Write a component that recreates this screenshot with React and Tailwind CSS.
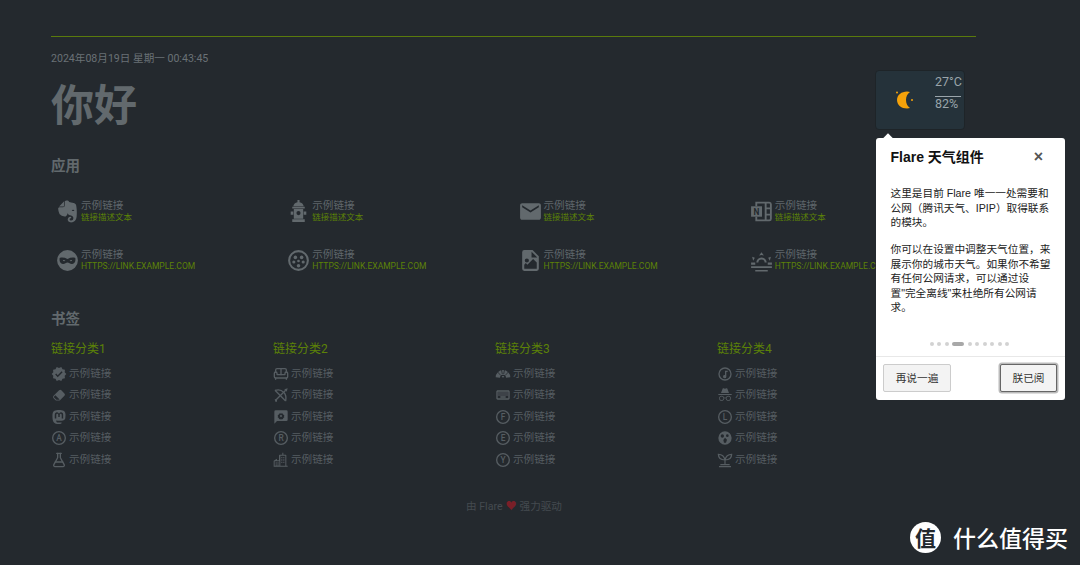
import React from 'react';
import { FaEvernote, FaMastodon } from 'react-icons/fa';
import { MdEmail, MdVerified, MdOutlineKeyboard } from 'react-icons/md';
import { BsEraserFill } from 'react-icons/bs';
import { FlaskConical, Sofa } from 'lucide-react';

const Svg = ({ className, children }) => (
  <svg viewBox="0 0 24 24" fill="currentColor" className={className}>
    {children}
  </svg>
);

const Hydrant = ({ className }) => (
  <Svg className={className}>
    <path fillRule="evenodd" d="M11 1h2v2.100A5 5 0 0 1 17 7H7a5 5 0 0 1 4-3.900V1ZM6 7.500h12V9H6V7.500ZM7.500 9.500h9v9.500h-9V9.500ZM12 11.500a2 2 0 1 0 0 4 2 2 0 0 0 0-4ZM4.500 12H7v3H4.500v-3ZM17 12h2.500v3H17v-3ZM6 19.500h12v2.500H6v-2.500Z" />
  </Svg>
);

const Mask = ({ className }) => (
  <Svg className={className}>
    <path fillRule="evenodd" d="M12 2a10 10 0 1 0 0 20 10 10 0 0 0 0-20ZM4.500 9.500c2.500-.6 5-.2 7.500 1 2.500-1.200 5-1.600 7.500-1 .5 3-.4 5.500-3 5.800-2 .2-3-1.300-4.500-1.300s-2.500 1.500-4.500 1.300c-2.600-.3-3.500-2.800-3-5.800Zm3 2.300c.8-.4 1.800-.2 2.500.5-.7.600-2.100.600-2.500-.5Zm9 0c-.8-.4-1.800-.2-2.500.5.700.6 2.100.6 2.500-.5Z" />
  </Svg>
);

const DotsCircle = ({ className }) => (
  <Svg className={className}>
    <path fillRule="evenodd" d="M12 2a10 10 0 1 0 0 20 10 10 0 0 0 0-20Zm0 2a8 8 0 1 1 0 16 8 8 0 0 1 0-16Z" />
    <circle cx="9" cy="9" r="1.700" />
    <circle cx="15" cy="9" r="1.700" />
    <circle cx="7.500" cy="13.500" r="1.500" />
    <circle cx="16.500" cy="13.500" r="1.500" />
    <circle cx="12" cy="12.500" r="1.300" />
    <circle cx="12" cy="17" r="1.700" />
  </Svg>
);

const FileImage = ({ className }) => (
  <Svg className={className}>
    <path fillRule="evenodd" d="M6 2h8l6 6v12a2 2 0 0 1-2 2H6a2 2 0 0 1-2-2V4a2 2 0 0 1 2-2Zm7 1.500V9h5.500L13 3.500ZM8.500 10a2 2 0 1 0 0 4 2 2 0 0 0 0-4ZM6 20h12v-6l-3.500-3.500L9 16l-1.500-1.500L6 16v4Z" />
  </Svg>
);

const Sunset = ({ className }) => (
  <Svg className={className}>
    <path d="M12 4 9.700 7.200a6.300 6.300 0 0 1 4.600 0L12 4ZM3 8.500l1 3.700 1.600-2.900L3 8.500Zm18 0-2.600.8 1.600 2.900 1-3.700ZM7 14a5 5 0 0 1 10 0h-2a3 3 0 0 0-6 0H7ZM2 14h4v2H2v-2Zm16 0h4v2h-4v-2ZM2 17.500h20v1.800H2v-1.800ZM6 21h12v1.500H6V21Z" />
  </Svg>
);

const OneNote = ({ className }) => (
  <svg viewBox="0 0 24 24" className={className} fill="none" stroke="currentColor" strokeWidth="1.800">
    <path d="M7 7V3.500h12.500a1.500 1.500 0 0 1 1.500 1.500v14a1.500 1.500 0 0 1-1.500 1.500H7V17" />
    <path d="M16 3.500v17M16 9h5M16 15h5" />
    <rect x="2" y="7" width="10.500" height="10" fill="currentColor" stroke="none" />
    <text x="7.200" y="15.200" textAnchor="middle" fontSize="8" fontWeight="700" fill="#24292e" stroke="none" fontFamily="Roboto">N</text>
  </svg>
);

const LetterCircle = ({ letter, className }) => (
  <svg viewBox="0 0 24 24" className={className} fill="none" stroke="currentColor" strokeWidth="2">
    <circle cx="12" cy="12" r="9.500" />
    <text x="12" y="16.500" textAnchor="middle" fontSize="12.500" fontWeight="500" fill="currentColor" stroke="none" fontFamily="Roboto">{letter}</text>
  </svg>
);

const Eraser = ({ className }) => (
  <span className={className}>
    <BsEraserFill className="h-full w-full scale-[0.8]" />
  </span>
);

const Bow = ({ className }) => (
  <svg viewBox="0 0 24 24" className={className} fill="none" stroke="currentColor" strokeWidth="2">
    <path d="M3 5c5-1.500 10-.5 13 3 3 3 4 8 3 13" />
    <path d="M3 5 19 21" />
    <path d="M4 20 19 5" />
    <path d="M17 3.500 22 2l-1.500 5z" fill="currentColor" stroke="none" />
    <path d="M2.500 18.500h3.500v3.500H3.500z" fill="currentColor" stroke="none" />
  </svg>
);

const MessageCog = ({ className }) => (
  <Svg className={className}>
    <path fillRule="evenodd" d="M4 2h16a2 2 0 0 1 2 2v12a2 2 0 0 1-2 2H6l-4 4V4a2 2 0 0 1 2-2Zm8 3.500-1 1.500-1.800-.2-.7 1.700-1.500 1 .5 1.500-.5 1.500 1.500 1 .7 1.700 1.800-.2 1 1.500 1-1.500 1.800.2.700-1.700 1.500-1-.5-1.500.5-1.500-1.500-1-.7-1.700-1.800.2-1-1.500Zm0 3.500a1.500 1.500 0 1 1 0 3 1.500 1.500 0 0 1 0-3Z" />
  </Svg>
);

const City = ({ className }) => (
  <Svg className={className}>
    <path fillRule="evenodd" d="M14 1h1.500v3H19a1 1 0 0 1 1 1v15.500h2V22H1v-9l5-3v2.500h3V5a1 1 0 0 1 1-1h4V1Zm-3 4.500v15h7.500v-15H11ZM12.500 7.500h1.500V9.500h-1.500v-2Zm3 0H17V9.500h-1.500v-2Zm-3 3.500h1.500v2h-1.500v-2Zm3 0H17v2h-1.500v-2Zm-3 3.500h1.500v2h-1.500v-2Zm3 0H17v2h-1.500v-2ZM2.500 14v6.500h7V14h-7ZM4 15.500h1.500V17.500H4v-2Zm2.800 0h1.500V17.500H6.800v-2ZM4 18.500h1.500v2H4v-2Zm2.800 0h1.500v2H6.800v-2Z" />
  </Svg>
);

const Fan = ({ className }) => (
  <svg viewBox="0 0 24 24" className={className}>
    <path fill="currentColor" d="M1 17a11 11 0 0 1 22 0l-6.500.500a4.500 4.500 0 0 0-9 0L1 17Z" />
    <path stroke="#24292e" strokeWidth="1.200" d="M4 9 8.500 14M9.500 5 11 12M14.500 5 13 12M20 9l-4.500 5" />
    <path fill="currentColor" d="M10 15h4l-2 3-2-3Z" />
  </svg>
);

const MusicCircle = ({ className }) => (
  <Svg className={className}>
    <path fillRule="evenodd" d="M12 2a10 10 0 1 0 0 20 10 10 0 0 0 0-20Zm0 2a8 8 0 1 1 0 16 8 8 0 0 1 0-16Zm4 3h-4v6.500a2.500 2.500 0 1 0 2 2.500V9h2V7Z" />
  </Svg>
);

const Incognito = ({ className }) => (
  <Svg className={className}>
    <path d="M17.060 13C15.200 13 13.640 14.330 13.240 16.100C12.290 15.690 11.420 15.800 10.760 16.090C10.350 14.310 8.790 13 6.940 13C4.770 13 3 14.790 3 17C3 19.210 4.770 21 6.940 21C9 21 10.680 19.380 10.840 17.320C11.180 17.080 12.070 16.630 13.160 17.340C13.340 19.390 15 21 17.060 21C19.230 21 21 19.210 21 17C21 14.790 19.230 13 17.060 13M6.940 14.150C8.500 14.150 9.730 15.430 9.730 17C9.730 18.570 8.500 19.850 6.940 19.850C5.380 19.850 4.140 18.570 4.140 17C4.140 15.430 5.390 14.150 6.940 14.150M17.060 14.150C18.620 14.150 19.860 15.430 19.860 17C19.860 18.570 18.620 19.850 17.060 19.850C15.500 19.850 14.270 18.570 14.270 17C14.270 15.430 15.500 14.150 17.060 14.150M22 10.500H2V12H22V10.500M15.530 2.630C15.310 2.140 14.750 1.880 14.220 2.050L12 2.790L9.770 2.050L9.720 2.040C9.190 1.890 8.630 2.170 8.430 2.680L6 9H18L15.560 2.680L15.530 2.630Z" />
  </Svg>
);

const Palette = ({ className }) => (
  <Svg className={className}>
    <path fillRule="evenodd" d="M12 2a10 10 0 1 0 0 20 10 10 0 0 0 0-20ZM8 6.500a2.500 2.500 0 1 1 0 5 2.500 2.500 0 0 1 0-5Zm7.500 0a2 2 0 1 1 0 4 2 2 0 0 1 0-4ZM12 11.500l3 3-1.500 4.500h-3l-1-4 2.500-3.500Z" />
  </Svg>
);

const SproutPot = ({ className }) => (
  <svg viewBox="0 0 24 24" className={className} fill="none" stroke="currentColor" strokeWidth="1.800">
    <path d="M12 19V12M12 12C11 7 8 3.500 2 3.500 2 9 5 12 12 12ZM12 12c1-5 4-8.500 10-8.500C22 9 19 12 12 12Z" />
    <path d="M5 19h14M3 22h18" />
  </svg>
);

const apps = [
  { Icon: FaEvernote, sub: '链接描述文本' },
  { Icon: Hydrant, sub: '链接描述文本' },
  { Icon: MdEmail, sub: '链接描述文本' },
  { Icon: OneNote, sub: '链接描述文本' },
  { Icon: Mask, sub: 'HTTPS://LINK.EXAMPLE.COM' },
  { Icon: DotsCircle, sub: 'HTTPS://LINK.EXAMPLE.COM' },
  { Icon: FileImage, sub: 'HTTPS://LINK.EXAMPLE.COM' },
  { Icon: Sunset, sub: 'HTTPS://LINK.EXAMPLE.COM' },
];

const letter = (l) => ({ className }) => <LetterCircle letter={l} className={className} />;

const bookmarks = [
  { title: '链接分类1', icons: [MdVerified, Eraser, FaMastodon, letter('A'), FlaskConical] },
  { title: '链接分类2', icons: [Sofa, Bow, MessageCog, letter('R'), City] },
  { title: '链接分类3', icons: [Fan, MdOutlineKeyboard, letter('F'), letter('E'), letter('Y')] },
  { title: '链接分类4', icons: [MusicCircle, Incognito, letter('L'), Palette, SproutPot] },
];

const dots = [0, 1, 2, 3, 4, 5, 6, 7, 8, 9];

export default function App() {
  return (
    <div className="relative h-[565px] w-[1080px] overflow-hidden bg-[#24292e] font-['Roboto','Noto_Sans_CJK_SC',sans-serif]">
      <main className="ml-[51px] w-[925px] pt-[36px]">
        <div className="border-t border-[#5a7a0c]" />
        <p className="mt-[15px] text-[10.6px] leading-[14px] text-[#6a7176]">2024年08月19日 星期一 00:43:45</p>
        <h1 className="mt-[14px] text-[43px] font-bold leading-[52px] text-[#62696d]">你好</h1>

        <h2 className="mt-[25px] text-[14.5px] font-bold leading-[20px] text-[#62696d]">应用</h2>
        <div className="mt-[20px] grid grid-cols-4 gap-y-[21px]">
          {apps.map(({ Icon, sub }, i) => (
            <div key={i} className="flex h-[28px] items-center pl-[4px]">
              <Icon className="h-[25px] w-[25px] shrink-0 text-[#62696d]" />
              <div className="ml-px whitespace-nowrap">
                <div className="text-[10.6px] leading-[13px] text-[#5f666b]">示例链接</div>
                <div className="text-[8.5px] leading-[11px] text-[#5c8207]">{sub}</div>
              </div>
            </div>
          ))}
        </div>

        <h2 className="mt-[36px] text-[14.5px] font-bold leading-[20px] text-[#62696d]">书签</h2>
        <div className="mt-[11px] grid grid-cols-[repeat(4,222px)]">
          {bookmarks.map((group) => (
            <div key={group.title}>
              <h3 className="text-[12px] leading-[16px] text-[#5c8207]">{group.title}</h3>
              <ul className="mt-[6px] flex flex-col">
                {group.icons.map((Icon, i) => (
                  <li key={i} className="flex h-[21.5px] items-center gap-[2px]">
                    <Icon className="h-[16px] w-[16px] shrink-0 text-[#565d62]" />
                    <span className="text-[10.6px] text-[#565d62]">示例链接</span>
                  </li>
                ))}
              </ul>
            </div>
          ))}
        </div>
      </main>

      <footer className="mt-[28px] flex w-[1028px] items-center justify-center gap-[3px] text-[10.6px] text-[#454b50]">
        <span>由 Flare</span>
        <span className="text-[11px] leading-none text-[#7a1f28]">♥</span>
        <span>强力驱动</span>
      </footer>

      {/* weather */}
      <div className="absolute left-[875px] top-[70px] flex h-[60px] w-[90px] items-center rounded-[4px] border border-[#1e2428] bg-[#25323a] pr-[3px]">
        <svg viewBox="0 0 24 24" className="ml-[17px] h-[24px] w-[24px]">
          <path fill="#f5a20a" d="M14 3.500C8.500 3.500 4 7 4 12s4.500 8.500 10 8.500c1.200 0 2.300-.2 3-.5-2.500-1.500-4-4.500-4-8s1.500-6.500 4-8c-.7-.3-1.800-.5-3-.5Z" />
          <circle cx="4" cy="4.500" r="1" fill="#f5a20a" />
          <circle cx="19" cy="12" r="1" fill="#f5a20a" />
        </svg>
        <div className="ml-auto mt-[3px] w-[26px] self-start text-[12.5px] leading-[15px] text-[#9aa5ab]">
          <div className="whitespace-nowrap pb-[7px]">27°C</div>
          <div className="border-t border-[#9aa5ab] leading-[14px]">82%</div>
        </div>
      </div>

      {/* popover */}
      <div className="absolute left-[876px] top-[138px] flex h-[262px] w-[189px] flex-col rounded-[3px] bg-white font-['Liberation_Sans','Noto_Sans_CJK_SC',sans-serif] text-[#222]">
        <div className="absolute -top-[3px] left-[8px] h-[8px] w-[8px] rotate-45 bg-white" />
        <div className="flex items-center justify-between pl-[14.5px] pr-[22px] pt-[10px]">
          <h4 className="text-[14px] font-bold leading-[18px] text-[#111]">Flare 天气组件</h4>
          <span className="text-[16px] font-bold leading-none text-[#555]">×</span>
        </div>
        <div className="mt-[20px] pl-[14.5px] pr-[14px] text-[10.67px] leading-[14.5px]">
          <p>这里是目前 Flare 唯一一处需要和公网（腾讯天气、IPIP）取得联系的模块。</p>
          <p className="mt-[12.5px]">你可以在设置中调整天气位置，来展示你的城市天气。如果你不希望有任何公网请求，可以通过设置"完全离线"来杜绝所有公网请求。</p>
        </div>
        <div className="mt-auto flex items-center justify-center gap-[3.5px] pb-[10px] pr-[2px]">
          {dots.map((d) => (
            <span key={d} className={d === 3 ? 'h-[4px] w-[12px] rounded-full bg-[#a8a8a8]' : 'h-[4px] w-[4px] rounded-full bg-[#d2d2d2]'} />
          ))}
        </div>
        <div className="flex items-center justify-between border-t border-[#e8e8e8] px-[7px] pb-[8px] pt-[7px]">
          <button className="h-[28px] w-[68px] rounded-[2px] border border-[#ccc] bg-[#f3f3f3] text-[10.67px] text-[#333]">再说一遍</button>
          <button className="mr-px h-[28px] w-[57px] rounded-[2px] border border-[#666] bg-[#f3f3f3] text-[10.67px] text-[#333] shadow-[0_0_0_1.5px_#bbb]">朕已阅</button>
        </div>
      </div>

      {/* watermark */}
      <div className="absolute left-[910px] top-[522px] flex items-center gap-[12px] font-['Noto_Sans_CJK_SC',sans-serif] text-white">
        <span className="flex h-[31px] w-[31px] items-center justify-center rounded-full bg-white text-[21px] font-bold leading-none text-[#24292e]">值</span>
        <span className="whitespace-nowrap text-[23px] font-medium leading-[31px]">什么值得买</span>
      </div>
    </div>
  );
}
